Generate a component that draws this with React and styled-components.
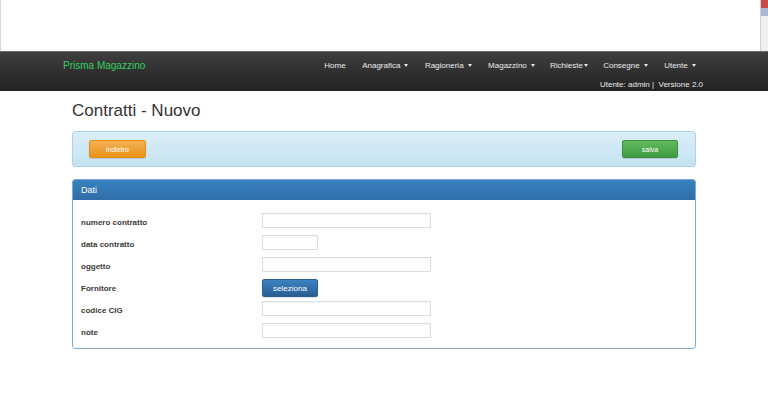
import React from "react";
import styled, { createGlobalStyle } from "styled-components";

const Global = createGlobalStyle`
  html, body { margin: 0; padding: 0; background: #fff; }
  body { font-family: "Liberation Sans", Arial, sans-serif; color: #333; }
  * { box-sizing: border-box; }
`;

const TopArea = styled.div`
  height: 51px;
  display: flex;
`;

const WhitePane = styled.div`
  flex: 1;
  background: #fff;
  border-left: 1px solid #d8d8d8;
  border-right: 1px solid #d0d0d0;
`;

const SideStrip = styled.div`
  width: 7px;
  background: #efefef;
  display: flex;
  flex-direction: column;
`;

const Swatch = styled.div`
  height: ${(p) => p.$h}px;
  background: ${(p) => p.$c};
`;

const Navbar = styled.nav`
  height: 40px;
  background: linear-gradient(#3e3e3e, #222);
  border-top: 1px solid #6a6a6a;
  display: flex;
  justify-content: space-between;
  padding: 0 64px 0 63px;
`;

const Brand = styled.div`
  color: #35d05f;
  font-size: 10px;
  line-height: 27px;
`;

const NavRight = styled.div`
  display: flex;
  flex-direction: column;
  align-items: flex-end;
`;

const NavList = styled.ul`
  list-style: none;
  margin: 0;
  padding: 0;
  display: flex;
  height: 27px;
  align-items: center;
`;

const NavItem = styled.li`
  color: #ececec;
  font-size: 8px;
  padding: 0 ${(p) => (p.$tight ? 7 : 8.25)}px;
  display: flex;
  align-items: center;
  gap: ${(p) => (p.$tight ? 1 : 4)}px;
`;

const Caret = styled.span`
  width: 0;
  height: 0;
  border-left: 2.5px solid transparent;
  border-right: 2.5px solid transparent;
  border-top: 3px solid #e6e6e6;
`;

const UserInfo = styled.div`
  color: #ececec;
  font-size: 8px;
  line-height: 12px;
  padding-right: 1px;
  white-space: pre;
`;

const Container = styled.main`
  margin: 0 72px;
`;

const Title = styled.h1`
  margin: 10px 0 10px;
  font-size: 17px;
  line-height: 20px;
  font-weight: normal;
  color: #333;
`;

const Well = styled.div`
  height: 36px;
  border: 1px solid #a9d4ec;
  border-radius: 3px;
  background: linear-gradient(#dbeef8, #c5e3f2);
  display: flex;
  align-items: center;
  justify-content: space-between;
  padding: 0 17px 0 16px;
`;

const palette = {
  warning: ["#f3b157", "#ea9318", "#e38d13"],
  success: ["#62bb5f", "#3f9a3f", "#3e8f3e"],
  primary: ["#3a83c2", "#2a5f92", "#28608f"],
};

const Button = styled.button`
  height: 18px;
  width: ${(p) => p.$w}px;
  border: 1px solid ${(p) => palette[p.$kind][2]};
  border-radius: 2px;
  background: linear-gradient(${(p) => palette[p.$kind][0]}, ${(p) => palette[p.$kind][1]});
  color: #fff;
  font-family: "Liberation Sans", Arial, sans-serif;
  font-size: ${(p) => p.$fs || 7}px;
  padding: 0;
  box-shadow: 0 1px 1px rgba(0, 0, 0, 0.12);
  align-self: ${(p) => p.$self || "auto"};
`;

const Panel = styled.section`
  margin-top: 12px;
  border: 1px solid #7ea9d1;
  border-radius: 3px;
  overflow: hidden;
`;

const PanelHeading = styled.div`
  height: 20px;
  background: linear-gradient(#3a82c1, #2e6ea8);
  color: #fff;
  font-size: 9px;
  line-height: 20px;
  padding-left: 8px;
`;

const PanelBody = styled.div`
  padding: 9px 8px 7px;
  background: #fff;
`;

const Row = styled.div`
  display: grid;
  grid-template-columns: 181px 1fr;
  height: 22px;
  align-items: center;
`;

const Label = styled.label`
  font-size: 8px;
  font-weight: bold;
  color: #3a3a3a;
  padding-top: 4px;
`;

const Input = styled.div`
  width: ${(p) => p.$w}px;
  height: 15px;
  border: 1px solid #dcdcdc;
  background: #fff;
  box-shadow: inset 0 1px 1px rgba(0, 0, 0, 0.04);
`;

const fields = [
  { label: "numero contratto", w: 169 },
  { label: "data contratto", w: 56 },
  { label: "oggetto", w: 169 },
  { label: "Fornitore", button: true },
  { label: "codice CIG", w: 169 },
  { label: "note", w: 169 },
];

const navItems = [
  { t: "Home" },
  { t: "Anagrafica", c: true },
  { t: "Ragioneria", c: true },
  { t: "Magazzino", c: true },
  { t: "Richieste", c: true, tight: true },
  { t: "Consegne", c: true },
  { t: "Utente", c: true },
];

export default function App() {
  return (
    <>
      <Global />
      <TopArea>
        <WhitePane />
        <SideStrip>
          <Swatch $h={8} $c="#c94848" />
          <Swatch $h={8} $c="#a9b6d6" />
        </SideStrip>
      </TopArea>
      <Navbar>
        <Brand>Prisma Magazzino</Brand>
        <NavRight>
          <NavList>
            {navItems.map((n) => (
              <NavItem key={n.t} $tight={n.tight}>
                {n.t}
                {n.c && <Caret />}
              </NavItem>
            ))}
          </NavList>
          <UserInfo>{"Utente: admin |  Versione 2.0"}</UserInfo>
        </NavRight>
      </Navbar>
      <Container>
        <Title>Contratti - Nuovo</Title>
        <Well>
          <Button $kind="warning" $w={57}>indietro</Button>
          <Button $kind="success" $w={56}>salva</Button>
        </Well>
        <Panel>
          <PanelHeading>Dati</PanelHeading>
          <PanelBody>
            {fields.map((f) => (
              <Row key={f.label}>
                <Label>{f.label}</Label>
                {f.button ? (
                  <Button $kind="primary" $w={56} $fs={8} $self="end">
                    seleziona
                  </Button>
                ) : (
                  <Input $w={f.w} />
                )}
              </Row>
            ))}
          </PanelBody>
        </Panel>
      </Container>
    </>
  );
}
